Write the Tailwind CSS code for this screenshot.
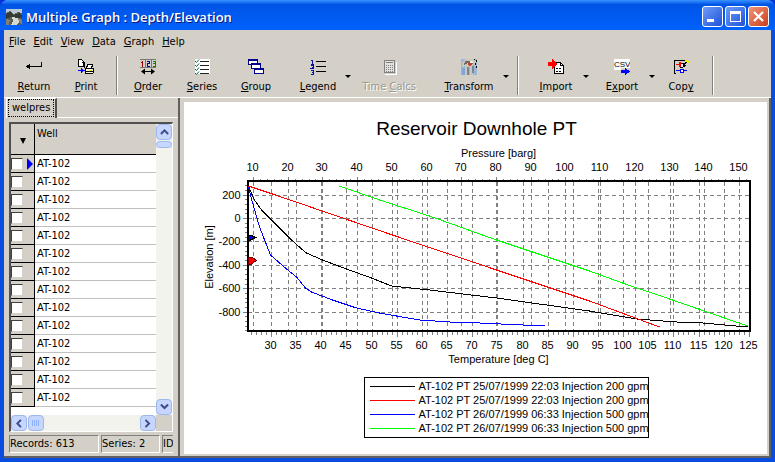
<!DOCTYPE html>
<html lang="en">
<head>
  <meta charset="UTF-8" />
  <meta name="viewport" content="width=device-width, initial-scale=1.0" />
  <title>Multiple Graph : Depth/Elevation</title>
  <script src="https://cdn.jsdelivr.net/npm/@tailwindcss/browser@4"></script>
</head>
<body class="h-screen overflow-hidden bg-[#0831d9] font-['DejaVu_Sans_Condensed','DejaVu_Sans',sans-serif] text-[11px] leading-4 text-black">
  <div class="flex h-full flex-col rounded-t-lg border-x-4 border-b-4 border-[#0a4be0] bg-[#d4d0c8]">

    <!-- Title bar -->
    <header class="-mx-1 flex h-[30px] shrink-0 items-center gap-1 rounded-t-lg bg-linear-to-b from-[#3a93ff] from-0% via-[#0054e6] via-15% to-[#0060fa] to-90% pt-[3px] pr-[6px] pl-[6px]">
      <svg class="size-4" viewBox="0 0 16 16" shape-rendering="crispEdges" aria-hidden="true">
        <rect width="16" height="16" fill="#5c5f57" />
        <path d="M0 0h16v4l-4-1-4 2-4-3-4 2z" fill="#b9c9d6" />
        <path d="M0 5l4-2 4 3 5-2 3 2v3l-6 1-5-2-5 2z" fill="#343a38" />
        <path d="M6 8l5 1 3 3-4 4H5l2-4z" fill="#d5d8d4" />
        <path d="M0 10l4 1-1 5H0zM12 9l4 2v4l-3-2z" fill="#87826c" />
      </svg>
      <h1 class="flex-1 truncate font-['Open_Sans',sans-serif] text-[13px] font-semibold text-white [text-shadow:1px_1px_#0a1883]">Multiple Graph : Depth/Elevation</h1>
      <div class="flex gap-[2px]">
        <button aria-label="Minimize" class="size-[21px] rounded-[3px] border border-white bg-linear-to-br from-[#6f9cf7] to-[#1f4fd8]">
          <svg viewBox="0 0 19 19" class="size-[19px]"><rect x="4" y="12" width="7" height="3" fill="#fff" /></svg>
        </button>
        <button aria-label="Maximize" class="size-[21px] rounded-[3px] border border-white bg-linear-to-br from-[#6f9cf7] to-[#1f4fd8]">
          <svg viewBox="0 0 19 19" class="size-[19px]" shape-rendering="crispEdges"><path d="M4 4h11v11H4zM5 7v7h9V7z" fill="#fff" fill-rule="evenodd" /></svg>
        </button>
        <button aria-label="Close" class="size-[21px] rounded-[3px] border border-white bg-linear-to-br from-[#ee9478] to-[#cc3a10]">
          <svg viewBox="0 0 19 19" class="size-[19px]"><path d="M5 5l9 9M14 5l-9 9" stroke="#fff" stroke-width="2.2" /></svg>
        </button>
      </div>
    </header>

    <!-- Menu -->
    <nav class="flex h-6 shrink-0 items-center gap-2 pl-[5px] [&_u]:decoration-1 [&_u]:underline-offset-1 [&_u]:[text-decoration-skip-ink:none]">
      <a href="#"><u>F</u>ile</a>
      <a href="#"><u>E</u>dit</a>
      <a href="#"><u>V</u>iew</a>
      <a href="#"><u>D</u>ata</a>
      <a href="#"><u>G</u>raph</a>
      <a href="#"><u>H</u>elp</a>
    </nav>

    <!-- Toolbar -->
    <div class="flex h-[43px] shrink-0 pt-[2px] pl-1 [&_u]:decoration-1 [&_u]:underline-offset-1 [&_u]:[text-decoration-skip-ink:none]">
      <button class="flex w-[52px] flex-col items-center gap-1 pt-[3px]">
        <svg class="size-4" viewBox="0 0 16 16" shape-rendering="crispEdges"><path d="M15 3h1v5H3V7h12z" /><path d="M0 7h1V6h2V5h1v5H3V9H1V8H0z" /></svg>
        <span><u>R</u>eturn</span>
      </button>
      <button class="flex w-[52px] flex-col items-center gap-1 pt-[3px]">
        <svg class="size-4" viewBox="0 0 16 16" shape-rendering="crispEdges">
          <path d="M.5.5h3l2 2v5h-5zM3.5 3.5h3v5" fill="#fff" stroke="#000" />
          <path d="M0 11h3V9l4 2.500-4 2.500v-2H0z" fill="#00f" />
          <path d="M9.500 5.500h5l-1 4h-5z" fill="#fff" stroke="#000" />
          <path d="M7.500 9.500h8v4l-1 1h-7z" fill="#fffbd0" stroke="#000" /><path d="M8 12h7v1H8z" /><path d="M12 11h2v1h-2z" fill="#e8d800" />
        </svg>
        <span><u>P</u>rint</span>
      </button>
      <div class="ml-1 h-[39px] w-[2px] border-r border-l border-r-white border-l-[#808080]"></div>
      <button class="ml-[3px] flex w-[54px] flex-col items-center gap-1 pt-[3px]">
        <svg class="size-4" viewBox="0 0 16 16">
          <path d="M0 .500h16M0 8.500h16M5.500 0v8M11.500 0v8" stroke="#777" fill="none" shape-rendering="crispEdges" />
          <g fill="none" shape-rendering="crispEdges"><path d="M1 3.500h2M2.500 2v6" stroke="#900" /><path d="M7 2.500h2.500V5M9 4.500H7.500V7M7 7.500h3" stroke="#00a" /><path d="M13 2.500h2.500V8M13 4.500h2M13 7.500h2" stroke="#080" /></g>
          <path d="M3 12.500h10" stroke="#000" /><path d="M1 12.500l4-3v6zM15 12.500l-4-3v6z" />
        </svg>
        <span><u>O</u>rder</span>
      </button>
      <button class="flex w-[54px] flex-col items-center gap-1 pt-[3px]">
        <svg class="size-4" viewBox="0 0 16 16">
          <rect width="15" height="15" x="1" fill="#fff" />
          <path d="M6 2.500h9M6 6.500h9M6 10.500h9M6 14.500h9" stroke="#222" shape-rendering="crispEdges" />
          <path d="M1 2l1.500 1.500L5 .500M1 6l1.500 1.500L5 4.500M1 10l1.500 1.500L5 8.500M1 14l1.500 1.500L5 12.500" fill="none" stroke="#006a50" />
        </svg>
        <span><u>S</u>eries</span>
      </button>
      <button class="flex w-[54px] flex-col items-center gap-1 pt-[3px]">
        <svg class="size-4" viewBox="0 0 16 16" shape-rendering="crispEdges" fill="#fff" stroke="#00008b">
          <path d="M.500.500h9v5h-9zM.500 1.500h9" /><path d="M3.500 4.500h9v5h-9zM3.500 5.500h9" /><path d="M6.500 9.500h9v5h-9zM6.500 10.500h9" />
        </svg>
        <span><u>G</u>roup</span>
      </button>
      <button class="ml-2 flex w-[54px] flex-col items-center gap-1 pt-[3px]">
        <svg class="size-4" viewBox="0 0 16 16">
          <path d="M6 2.500h10M6 7.500h10M6 12.500h10" stroke="#000" shape-rendering="crispEdges" />
          <path d="M1 1.500h1.500V5M1 5h3M1 6.500h2.500v1.500L1 9.500h3M1 11h2.500v4H1M1.500 13h2" fill="none" stroke="#0010a8" shape-rendering="crispEdges" />
        </svg>
        <span><u>L</u>egend</span>
      </button>
      <button aria-label="Legend options" class="w-[6px]"><svg viewBox="0 0 6 3" class="h-[3px] w-[6px]"><path d="M0 0h6L3 3z" /></svg></button>
      <button disabled class="ml-[2px] flex w-[72px] flex-col items-center gap-1 pt-[3px] text-[#999790] [text-shadow:1px_1px_white]">
        <svg class="size-4" viewBox="0 0 16 16" shape-rendering="crispEdges">
          <path d="M4 15h11V3" fill="none" stroke="#fff" stroke-width="1" />
          <rect x="3.500" y="1.500" width="10" height="12" rx="1" fill="#e4e2dc" stroke="#808080" />
          <path d="M5 3.500h7" stroke="#808080" /><path d="M5 6.500h8M5 8.500h8M5 10.500h8M5 12.500h8" stroke="#808080" stroke-dasharray="1 1" />
        </svg>
        <span>Time <u>C</u>alcs</span>
      </button>
      <button class="ml-[17px] flex w-[54px] flex-col items-center gap-1 pt-[3px]">
        <svg class="size-4" viewBox="0 0 16 16" shape-rendering="crispEdges">
          <rect width="16" height="16" fill="#9bb5dc" />
          <path d="M1 3l4-3h7l3 3v4l-3-2v11H9V8H7v8H4V7L1 8z" fill="#c9c8be" />
          <path d="M4 2h6l3 2-3 1-3-1-4 2z" fill="#6d6b65" />
          <path d="M6 5l2-1 3 1-2 2z" fill="#d23a26" /><path d="M9 2h3v2H9z" fill="#f4f0dc" />
          <path d="M6 8h2v8H6zM11 7h2v7h-2z" fill="#7b8790" /><path d="M1 9h3v7H1z" fill="#7fa6d8" />
          <path d="M13 0h1v1h-1zM15 1h1v2h-1zM14 4h1v2h-1zM15 7h1v2h-1z" />
        </svg>
        <span><u>T</u>ransform</span>
      </button>
      <button aria-label="Transform options" class="ml-[7px] w-[6px]"><svg viewBox="0 0 6 3" class="h-[3px] w-[6px]"><path d="M0 0h6L3 3z" /></svg></button>
      <div class="ml-2 h-[39px] w-[2px] border-r border-l border-r-white border-l-[#808080]"></div>
      <button class="ml-[10px] flex w-[54px] flex-col items-center gap-1 pt-[3px]">
        <svg class="size-4" viewBox="0 0 16 16" shape-rendering="crispEdges">
          <path d="M6.500 3.500h6l3 3v8h-9z" fill="#fff" stroke="#000" /><path d="M12.500 3.500v3h3" fill="none" stroke="#000" /><path d="M8 9.500h6M8 12.500h6" stroke="#000" stroke-dasharray="2 1" />
          <path d="M0 3h4V0l5 5-5 5V7H0z" fill="#f00" />
        </svg>
        <span><u>I</u>mport</span>
      </button>
      <button aria-label="Import options" class="w-[6px]"><svg viewBox="0 0 6 3" class="h-[3px] w-[6px]"><path d="M0 0h6L3 3z" /></svg></button>
      <button class="ml-[6px] flex w-[54px] flex-col items-center gap-1 pt-[3px]">
        <svg class="size-4" viewBox="0 0 16 16">
          <path d="M0 0h16v9H0z" fill="#fff" /><path d="M0 9h7v2H0z" fill="#fff" />
          <text x="0" y="8" font-family="Liberation Sans, sans-serif" font-size="8">CSV</text>
          <path d="M7 11h4V9l5 3.500-5 3.500v-2H7z" fill="#00f" shape-rendering="crispEdges" />
        </svg>
        <span>E<u>x</u>port</span>
      </button>
      <button aria-label="Export options" class="w-[6px]"><svg viewBox="0 0 6 3" class="h-[3px] w-[6px]"><path d="M0 0h6L3 3z" /></svg></button>
      <button class="flex w-[52px] flex-col items-center gap-1 pt-[3px]">
        <svg class="size-4" viewBox="0 0 16 16" shape-rendering="crispEdges">
          <path d="M3 14.500H1.500v-13h10" fill="none" stroke="#000" />
          <path d="M3 5.500h4" stroke="#f00" /><path d="M3 11.500h11" stroke="#00f" />
          <rect x="7" y="10" width="3" height="3" fill="#fff" stroke="#00f" />
          <path d="M7.500 4.500h3l2 2-3 2h-2z" fill="#fff" stroke="#000" /><path d="M10 6l3-4 1 1-3 5z" /><path d="M13 1h1v1h2v2h-2z" fill="#ee0" /><path d="M6 3h2v5H6z" fill="#f00" />
        </svg>
        <span>Cop<u>y</u></span>
      </button>
      <div class="ml-[5px] h-[39px] w-[2px] border-r border-l border-r-white border-l-[#808080]"></div>
    </div>

    <main class="flex min-h-0 flex-1 border-t border-white">
      <!-- Well list -->
      <section class="flex w-[176px] shrink-0 flex-col border-r-2 border-b-2 border-[#606060] pr-1 pl-[2px]">
        <div class="flex h-5 shrink-0 items-end">
          <button class="h-full border-t border-r-2 border-l border-t-white border-r-[#505050] border-l-white px-px pb-[2px]">
            <span class="block border border-dotted border-black px-[3px] leading-4">welpres</span>
          </button>
          <div class="-mr-1 flex-1 border-b border-white"></div>
        </div>

        <div class="mt-1 mr-px ml-[3px] flex min-h-0 flex-1 flex-col border-t-2 border-r border-b border-l-2 border-t-[#505050] border-r-white border-b-white border-l-[#505050] bg-white">
          <div class="flex min-h-0 flex-1">
            <div class="min-w-0 flex-1 overflow-hidden">
              <table class="w-full table-fixed border-separate border-spacing-0 text-left">
                <thead>
                  <tr class="h-[31px] bg-[#d4d0c8] align-top">
                    <th class="w-6 border-r border-b border-black pt-[14px] text-center"><svg viewBox="0 0 6 6" class="mx-auto size-[6px]"><path d="M0 0h6L3 6z" /></svg></th>
                    <th class="border-b border-black pt-[2px] pl-[2px] font-normal">Well</th>
                  </tr>
                </thead>
                <tbody id="wells"></tbody>
              </table>
            </div>
            <div class="flex w-4 shrink-0 flex-col bg-[#f3f3ee]">
              <button aria-label="Scroll up" class="flex h-4 items-center justify-center rounded-sm border border-[#9db8ee] bg-[#c6d6fc]"><svg viewBox="0 0 10 6" class="w-[9px]"><path d="M1 5.500l4-4 4 4" fill="none" stroke="#3c4c8c" stroke-width="2.200" /></svg></button>
              <div class="mt-px h-[7px] rounded-sm border border-[#9db8ee] bg-[#c6d6fc]"></div>
              <div class="flex-1"></div>
              <button aria-label="Scroll down" class="flex h-4 items-center justify-center rounded-sm border border-[#9db8ee] bg-[#c6d6fc]"><svg viewBox="0 0 10 6" class="w-[9px]"><path d="M1 .500l4 4 4-4" fill="none" stroke="#3c4c8c" stroke-width="2.200" /></svg></button>
            </div>
          </div>
          <div class="flex h-4 shrink-0 bg-[#d4d0c8]">
            <div class="flex flex-1 bg-[#f3f3ee]">
              <button aria-label="Scroll left" class="flex w-4 items-center justify-center rounded-sm border border-[#9db8ee] bg-[#c6d6fc]"><svg viewBox="0 0 6 10" class="h-[9px]"><path d="M5.500 1l-4 4 4 4" fill="none" stroke="#3c4c8c" stroke-width="2.200" /></svg></button>
              <div class="ml-px flex w-4 items-center justify-center rounded-sm border border-[#9db8ee] bg-[#c6d6fc]"><svg viewBox="0 0 8 6" class="w-2" shape-rendering="crispEdges"><path d="M.500 0v6M2.500 0v6M4.500 0v6M6.500 0v6" stroke="#8cb0f8" /></svg></div>
              <div class="flex-1"></div>
              <button aria-label="Scroll right" class="flex w-4 items-center justify-center rounded-sm border border-[#9db8ee] bg-[#c6d6fc]"><svg viewBox="0 0 6 10" class="h-[9px]"><path d="M.500 1l4 4-4 4" fill="none" stroke="#3c4c8c" stroke-width="2.200" /></svg></button>
            </div>
            <div class="w-4"></div>
          </div>
        </div>

        <footer class="my-[3px] mr-px ml-[3px] flex h-[18px] shrink-0 gap-[2px] whitespace-nowrap">
          <div class="w-[90px] border border-t-[#808080] border-r-white border-b-white border-l-[#808080]">Records: 613</div>
          <div class="w-[59px] border border-t-[#808080] border-r-white border-b-white border-l-[#808080]">Series: 2</div>
          <div class="min-w-0 flex-1 overflow-hidden border border-r-0 border-t-[#808080] border-b-white border-l-[#808080]">ID</div>
        </footer>
      </section>

      <!-- Chart -->
      <section class="min-w-0 flex-1 border-r-2 border-b-2 border-[#606060]">
        <div class="h-full border-t-4 border-r-2 border-b-2 border-l-4 border-[#d4d0c8] bg-white">
          <svg id="chart" class="block size-full font-['Liberation_Sans',Arial,sans-serif] text-[11px]" viewBox="0 0 582 352" role="img" aria-label="Reservoir Downhole PT"></svg>
        </div>
      </section>
    </main>
  </div>

  <script>
    // Well rows
    document.getElementById('wells').innerHTML = Array.from({ length: 14 }, (_, i) => `
      <tr class="h-[18px]">
        <td class="border-r border-b border-black bg-[#d4d0c8] p-0">
          <div class="flex items-center justify-between">
            <input type="checkbox" id="well${i}" class="size-3 appearance-none border border-t-[#404040] border-r-[#d4d0c8] border-b-[#d4d0c8] border-l-[#404040] bg-white" />
            ${i === 0 ? '<svg viewBox="0 0 6 12" class="mr-px h-3 w-[6px]"><path d="M0 0l6 6-6 6z" fill="#00f" /></svg>' : ''}
          </div>
        </td>
        <td class="border-b border-[#c0c0c0] py-0 pl-[2px]"><label for="well${i}" class="block leading-4">AT-102</label></td>
      </tr>
    `).join('');

    // Axis scales
    const plot = { left: 63, right: 565, top: 79, bottom: 229 };
    const tempX = t => Math.round(86 + (t - 30) * 5.03);
    const pressX = p => Math.round(68 + (p - 10) * 3.471);
    const elevY = e => Math.round(116 - e * 0.117);

    const line = (x1, y1, x2, y2) => `M${x1 + 0.5} ${y1 + 0.5}L${x2 + 0.5} ${y2 + 0.5}`;
    let grid = '', ticks = '', labels = '';

    for (let t = 26; t <= 125; t++) {
      const x = tempX(t), major = t % 5 === 0;
      ticks += line(x, plot.bottom, x, plot.bottom + (major ? 5 : 3));
      if (major && t >= 30) {
        grid += line(x, plot.top, x, plot.bottom);
        labels += `<text x="${x}" y="247" text-anchor="middle">${t}</text>`;
      }
    }
    for (let p = 10; p <= 152; p += 2) {
      const x = pressX(p), major = p % 10 === 0;
      ticks += line(x, plot.top - (major ? 5 : 3), x, plot.top);
      if (major) {
        grid += line(x, plot.top, x, plot.bottom);
        labels += `<text x="${x}" y="69" text-anchor="middle">${p}</text>`;
      }
    }
    for (let e = -960; e <= 300; e += 40) {
      const y = elevY(e), major = e % 200 === 0;
      ticks += line(plot.left - (major ? 5 : 3), y, plot.left, y);
      if (major) {
        grid += line(plot.left, y, plot.right, y);
        labels += `<text x="56" y="${y + 4}" text-anchor="end">${e}</text>`;
      }
    }

    const series = [
      { name: 'AT-102 PT 25/07/1999 22:03 Injection 200 gpm', color: '#000000', points: '64,84 66,89 70,98 77,108 85,116 105,136 117,147 122,151 138,158 162,167 187,176 207,184 245,188 312,196 362,203 405,209 452,217 492,220 518,221 563,225' },
      { name: 'AT-102 PT 25/07/1999 22:03 Injection 200 gpm', color: '#ff0000', points: '64,84 88,92 205,132 312,168 405,199 475,225' },
      { name: 'AT-102 PT 26/07/1999 06:33 Injection 500 gpm', color: '#0000ff', points: '64,85 67,97 75,125 86,153 102,167 112,175 121,186 127,190 148,198 172,206 195,211 212,214 235,218 265,220 295,221 338,223 360,224' },
      { name: 'AT-102 PT 26/07/1999 06:33 Injection 500 gpm', color: '#00ff00', points: '155,84 195,98 245,114 312,138 405,169 438,181 488,198 563,224' },
    ];

    document.getElementById('chart').innerHTML = `
      <text x="292" y="33" text-anchor="middle" font-size="19">Reservoir Downhole PT</text>
      <text x="314" y="55" text-anchor="middle">Pressure [barg]</text>
      <text x="314" y="261" text-anchor="middle">Temperature [deg C]</text>
      <text transform="translate(28 155) rotate(-90)" text-anchor="middle">Elevation [m]</text>
      <g fill="none" shape-rendering="crispEdges">
        <path d="${grid}" stroke="#808080" stroke-dasharray="4 3" />
        <path d="${ticks}" stroke="#808080" />
        <rect x="63" y="79" width="502" height="150" stroke="#000" stroke-width="2" />
        ${series.map(s => `<polyline points="${s.points}" stroke="${s.color}" />`).join('')}
        <path d="M64 133h2l5 2.500-5 2.500h-2z" fill="#00f" stroke="#000" />
        <path d="M64 155h3l5 3.500-5 3.500h-3z" fill="#f00" stroke="#600" />
        <rect x="179.500" y="275.500" width="284" height="60" stroke="#000" />
        ${series.map((s, i) => `<path d="M185 ${284.5 + i * 14}h45" stroke="${s.color}" />`).join('')}
      </g>
      ${labels}
      ${series.map((s, i) => `<text x="234" y="${288 + i * 14}">${s.name}</text>`).join('')}
    `;
  </script>
</body>
</html>
